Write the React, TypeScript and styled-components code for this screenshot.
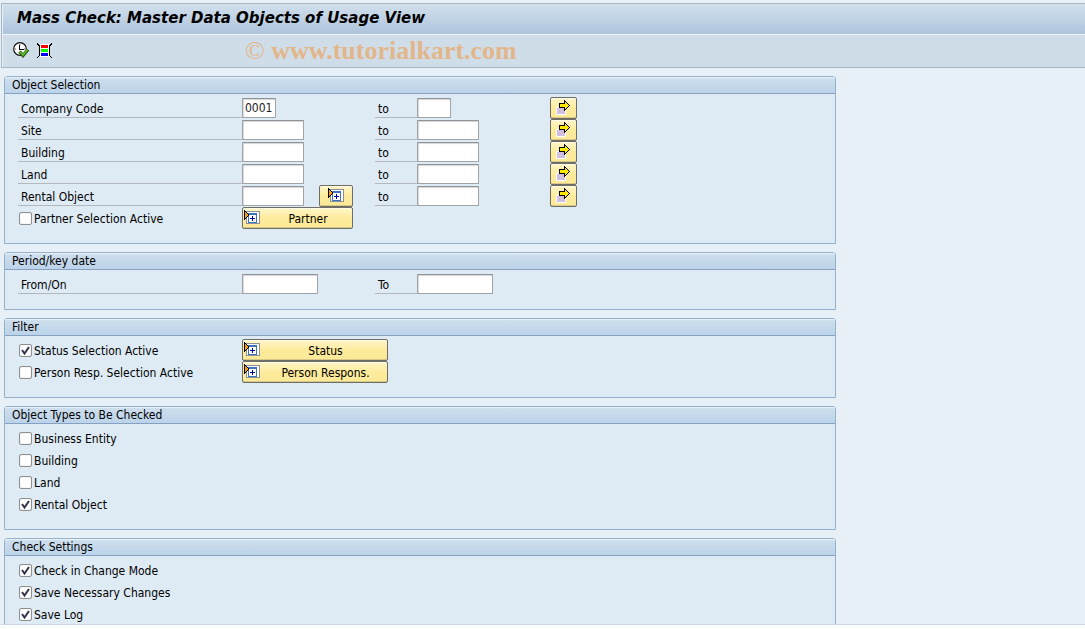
import React, { useId } from "react";
import styled, { createGlobalStyle } from "styled-components";

const GlobalStyle = createGlobalStyle`
  * { box-sizing: border-box; }
  body {
    margin: 0;
    background: #e8f0f7;
    color: #000;
    font-family: "DejaVu Sans Condensed", "DejaVu Sans", Tahoma, sans-serif;
    font-size: 12px;
    line-height: 16px;
  }
`;

const Window = styled.div`
  display: flex;
  flex-direction: column;
  height: 100vh;
  padding-top: 3px;
`;

const Header = styled.header`
  flex: none;
  margin-left: 1px;
  border: solid #a8b6c6;
  border-width: 1px 0 1px 1px;
`;

const TitleBar = styled.div`
  height: 30px;
  padding: 0 14px;
  border-left: 1px solid #e8f0f7;
  background: linear-gradient(#d2e0ec, #aec4dd);
`;

const Title = styled.h1`
  margin: 0;
  font-family: "DejaVu Sans", Tahoma, sans-serif;
  font-size: 15px;
  line-height: 28px;
  font-style: italic;
  font-weight: bold;
  white-space: nowrap;
`;

const Toolbar = styled.div`
  display: flex;
  align-items: center;
  height: 33px;
  padding: 0 10px;
  border-top: 1px solid #f0f5fa;
  border-left: 1px solid #e8f0f7;
  background: #cfdde8;
`;

const ToolButton = styled.button`
  display: flex;
  width: 24px;
  padding: 0 0 2px;
  border: 0;
  background: none;
`;

const Watermark = styled.span`
  margin-left: 184px;
  color: #e3b68a;
  font: bold 26px/30px "Liberation Serif", "Times New Roman", serif;
  white-space: nowrap;
`;

const CopyrightSign = styled.span`
  font-weight: normal;
`;

const Content = styled.main`
  display: flex;
  flex: 1;
  flex-direction: column;
  gap: 8px;
  min-height: 0;
  margin-left: 1px;
  padding: 8px 3px 0;
  border-bottom: 1px solid #cfd5e6;
  overflow: hidden;
`;

const Footer = styled.footer`
  flex: none;
  height: 4px;
  background: #fafbfd;
`;

const Panel = styled.section`
  flex: none;
  width: 100%;
  max-width: 832px;
  border: 1px solid #94b1cb;
  border-radius: 3px 3px 0 0;
  background: #deebf4;
`;

const PanelTitle = styled.h2`
  margin: 0;
  padding: 0 7px;
  border-bottom: 1px solid #86a1c2;
  border-radius: 2px 2px 0 0;
  background: linear-gradient(#cfdfed, #bcd3e9);
  box-shadow: inset 0 1px #eaf2f9;
  font-size: 12px;
  line-height: 16px;
  font-weight: normal;
`;

const PanelBody = styled.div`
  padding: 3px 13px 14px;
`;

const Row = styled.div`
  display: grid;
  grid-template-columns: 224px 133px 42px 133px 27px;
  align-items: center;
  height: 22px;
`;

const FieldLabel = styled.label`
  height: 20px;
  padding: 0 3px;
  border-bottom: 1px solid #b4b8bc;
  line-height: 22px;
  white-space: nowrap;
`;

const FieldCell = styled.div`
  display: flex;
  justify-content: space-between;
  align-items: center;
  width: 111px;
`;

const Field = styled.input<{ $width: number }>`
  width: ${(p) => p.$width}px;
  height: 20px;
  padding: 0 2px;
  border: 1px solid #a0a3a7;
  border-top-color: #8f9296;
  border-radius: 1px;
  background: #fff;
  box-shadow: inset 1px 1px 1px #d4d6d9;
  color: #222;
  font: inherit;
  outline: 0;
`;

const GoldButton = styled.button<{ $width: number }>`
  display: grid;
  grid-template-columns: 16px 1fr;
  gap: 4px;
  align-items: center;
  width: ${(p) => p.$width}px;
  height: 22px;
  padding: 0 0 0 1px;
  border: 1px solid #6e6d66;
  border-radius: 2px;
  background: linear-gradient(#fff6c9, #fdeb9c 50%, #fcea98);
  box-shadow: inset 0 1px #fffbe6, inset 0 -1px #d8c887;
  color: #000;
  font: inherit;
  line-height: 18px;
  white-space: nowrap;
`;

const ButtonText = styled.span`
  padding-top: 2px;
`;

const IconButton = styled(GoldButton)`
  display: flex;
  justify-content: center;
  padding: 0;
`;

const CheckRow = styled.div`
  display: flex;
  align-items: center;
  gap: 2px;
  padding-left: 1px;
`;

const CheckBox = styled.span`
  display: grid;
  width: 13px;
  height: 13px;

  > * { grid-area: 1 / 1; }
  svg { visibility: hidden; pointer-events: none; z-index: 1; }
  input:checked + svg { visibility: visible; }
`;

const CheckInput = styled.input`
  appearance: none;
  width: 13px;
  height: 13px;
  margin: 0;
  border: 1px solid #8e8f8f;
  border-radius: 2px;
  background: #fff;
  box-shadow: inset 0 0 1px #b0b0b0;
`;

const CheckLabel = styled.label`
  padding-top: 2px;
  white-space: nowrap;
`;

function ExecuteIcon() {
  return (
    <svg width="17" height="16" viewBox="0 0 17 16" aria-hidden="true">
      <circle cx="7" cy="7" r="6.300" fill="#fff" stroke="#111" strokeWidth="1.200" />
      <path d="M7 2v1M7 11v1M2 7h1M11 7h1" stroke="#555" />
      <path d="M6.500 3v5M6 7.500h5" stroke="#000" fill="none" />
      <path d="M6.500 9.500l3.500 4 5-6" fill="none" stroke="#2c5a10" strokeWidth="3.400" />
      <path d="M7 10l3 3 4.500-5.500" fill="none" stroke="#62c22e" strokeWidth="1.600" />
    </svg>
  );
}

function VariantIcon() {
  return (
    <svg width="15" height="15" viewBox="0 0 15 15" shapeRendering="crispEdges" aria-hidden="true">
      <rect x="3" y="1" width="9" height="13" fill="#fff" />
      <rect x="4" y="2" width="7" height="3" fill="#f00" />
      <rect x="4" y="6" width="7" height="3" fill="#0f0" />
      <rect x="4" y="10" width="7" height="3" fill="#00f" />
      <path d="M0 0h1v1h1v1h1v11h-1v1h-1v1h-1v-1h1v-1h1v-10h-1v-1h-1zM15 0h-1v1h-1v1h-1v11h1v1h1v1h1v-1h-1v-1h-1v-10h1v-1h1z" fill="#000" />
    </svg>
  );
}

function OptionsIcon() {
  return (
    <svg width="16" height="16" viewBox="0 0 16 16" shapeRendering="crispEdges" aria-hidden="true">
      <rect x="2" y="1" width="14" height="13" fill="#8b8f98" />
      <rect x="3" y="2" width="12" height="11" fill="#fff" />
      <rect x="4" y="3" width="9" height="10" fill="#3f72bb" />
      <rect x="5" y="5" width="7" height="7" fill="#fff" />
      <path d="M8 6h1v2h2v1h-2v2h-1v-2h-2v-1h2z" fill="#0000a0" />
      <path d="M0 0h1v1h1v1h1v1h1v1h1v2h-1v1h-1v1h-1v1h-1v1h-1z" fill="#000" />
      <path d="M1 2h1v1h1v1h1v2h-1v1h-1v1h-1z" fill="#f79a0c" />
    </svg>
  );
}

function MultipleIcon() {
  return (
    <svg width="15" height="16" viewBox="0 0 15 16" shapeRendering="crispEdges" aria-hidden="true">
      <rect x="0" y="7" width="10" height="8" fill="#fff" />
      <rect x="1" y="8" width="8" height="6" fill="#d2bfdd" />
      <path d="M3 3h5v-3h1v1h1v1h1v1h1v1h1v1h1v1h-1v1h-1v1h-1v1h-1v1h-1v1h-1v-3h-5z" fill="#000" />
      <path d="M4 4h5v-2h1v1h1v1h1v1h1v1h-1v1h-1v1h-1v1h-1v-2h-5z" fill="#ffe800" />
    </svg>
  );
}

function Check({ label, checked = false }: { label: string; checked?: boolean }) {
  const id = useId();
  return (
    <CheckRow>
      <CheckBox>
        <CheckInput id={id} type="checkbox" defaultChecked={checked} />
        <svg width="13" height="13" viewBox="0 0 13 13" aria-hidden="true">
          <path d="M3 6l2.500 3.500L10 3" fill="none" stroke="#30324a" strokeWidth="2" />
        </svg>
      </CheckBox>
      <CheckLabel htmlFor={id}>{label}</CheckLabel>
    </CheckRow>
  );
}

interface RangeProps {
  label: string;
  toLabel?: string;
  width: number;
  value?: string;
  options?: boolean;
  multiple?: boolean;
}

function RangeRow({ label, toLabel = "to", width, value = "", options, multiple = true }: RangeProps) {
  const id = useId();
  return (
    <Row>
      <FieldLabel htmlFor={`${id}-from`}>{label}</FieldLabel>
      <FieldCell>
        <Field id={`${id}-from`} $width={width} defaultValue={value} />
        {options && (
          <IconButton type="button" $width={34} aria-label={`${label} options`}>
            <OptionsIcon />
          </IconButton>
        )}
      </FieldCell>
      <FieldLabel htmlFor={`${id}-to`}>{toLabel}</FieldLabel>
      <Field id={`${id}-to`} $width={width} />
      {multiple && (
        <IconButton type="button" $width={27} aria-label={`Multiple selection for ${label}`}>
          <MultipleIcon />
        </IconButton>
      )}
    </Row>
  );
}

interface CheckActionProps {
  label: string;
  action: string;
  width: number;
  checked?: boolean;
}

function CheckActionRow({ label, action, width, checked }: CheckActionProps) {
  return (
    <Row>
      <Check label={label} checked={checked} />
      <GoldButton type="button" $width={width}>
        <OptionsIcon />
        <ButtonText>{action}</ButtonText>
      </GoldButton>
    </Row>
  );
}

function Group({ title, children }: { title: string; children: React.ReactNode }) {
  return (
    <Panel>
      <PanelTitle>{title}</PanelTitle>
      <PanelBody>{children}</PanelBody>
    </Panel>
  );
}

const objectTypes = [
  { label: "Business Entity", checked: false },
  { label: "Building", checked: false },
  { label: "Land", checked: false },
  { label: "Rental Object", checked: true },
];

const settings = ["Check in Change Mode", "Save Necessary Changes", "Save Log"];

export default function App() {
  return (
    <>
      <GlobalStyle />
      <Window>
        <Header>
          <TitleBar>
            <Title>Mass Check: Master Data Objects of Usage View</Title>
          </TitleBar>
          <Toolbar>
            <ToolButton type="button" aria-label="Execute">
              <ExecuteIcon />
            </ToolButton>
            <ToolButton type="button" aria-label="Get variant">
              <VariantIcon />
            </ToolButton>
            <Watermark>
              <CopyrightSign>©</CopyrightSign> www.tutorialkart.com
            </Watermark>
          </Toolbar>
        </Header>
        <Content>
          <Group title="Object Selection">
            <RangeRow label="Company Code" width={34} value="0001" />
            <RangeRow label="Site" width={62} />
            <RangeRow label="Building" width={62} />
            <RangeRow label="Land" width={62} />
            <RangeRow label="Rental Object" width={62} options />
            <CheckActionRow label="Partner Selection Active" action="Partner" width={111} />
          </Group>
          <Group title="Period/key date">
            <RangeRow label="From/On" toLabel="To" width={76} multiple={false} />
          </Group>
          <Group title="Filter">
            <CheckActionRow label="Status Selection Active" action="Status" width={146} checked />
            <CheckActionRow label="Person Resp. Selection Active" action="Person Respons." width={146} />
          </Group>
          <Group title="Object Types to Be Checked">
            {objectTypes.map((t) => (
              <Row key={t.label}>
                <Check label={t.label} checked={t.checked} />
              </Row>
            ))}
          </Group>
          <Group title="Check Settings">
            {settings.map((s) => (
              <Row key={s}>
                <Check label={s} checked />
              </Row>
            ))}
          </Group>
        </Content>
        <Footer />
      </Window>
    </>
  );
}
